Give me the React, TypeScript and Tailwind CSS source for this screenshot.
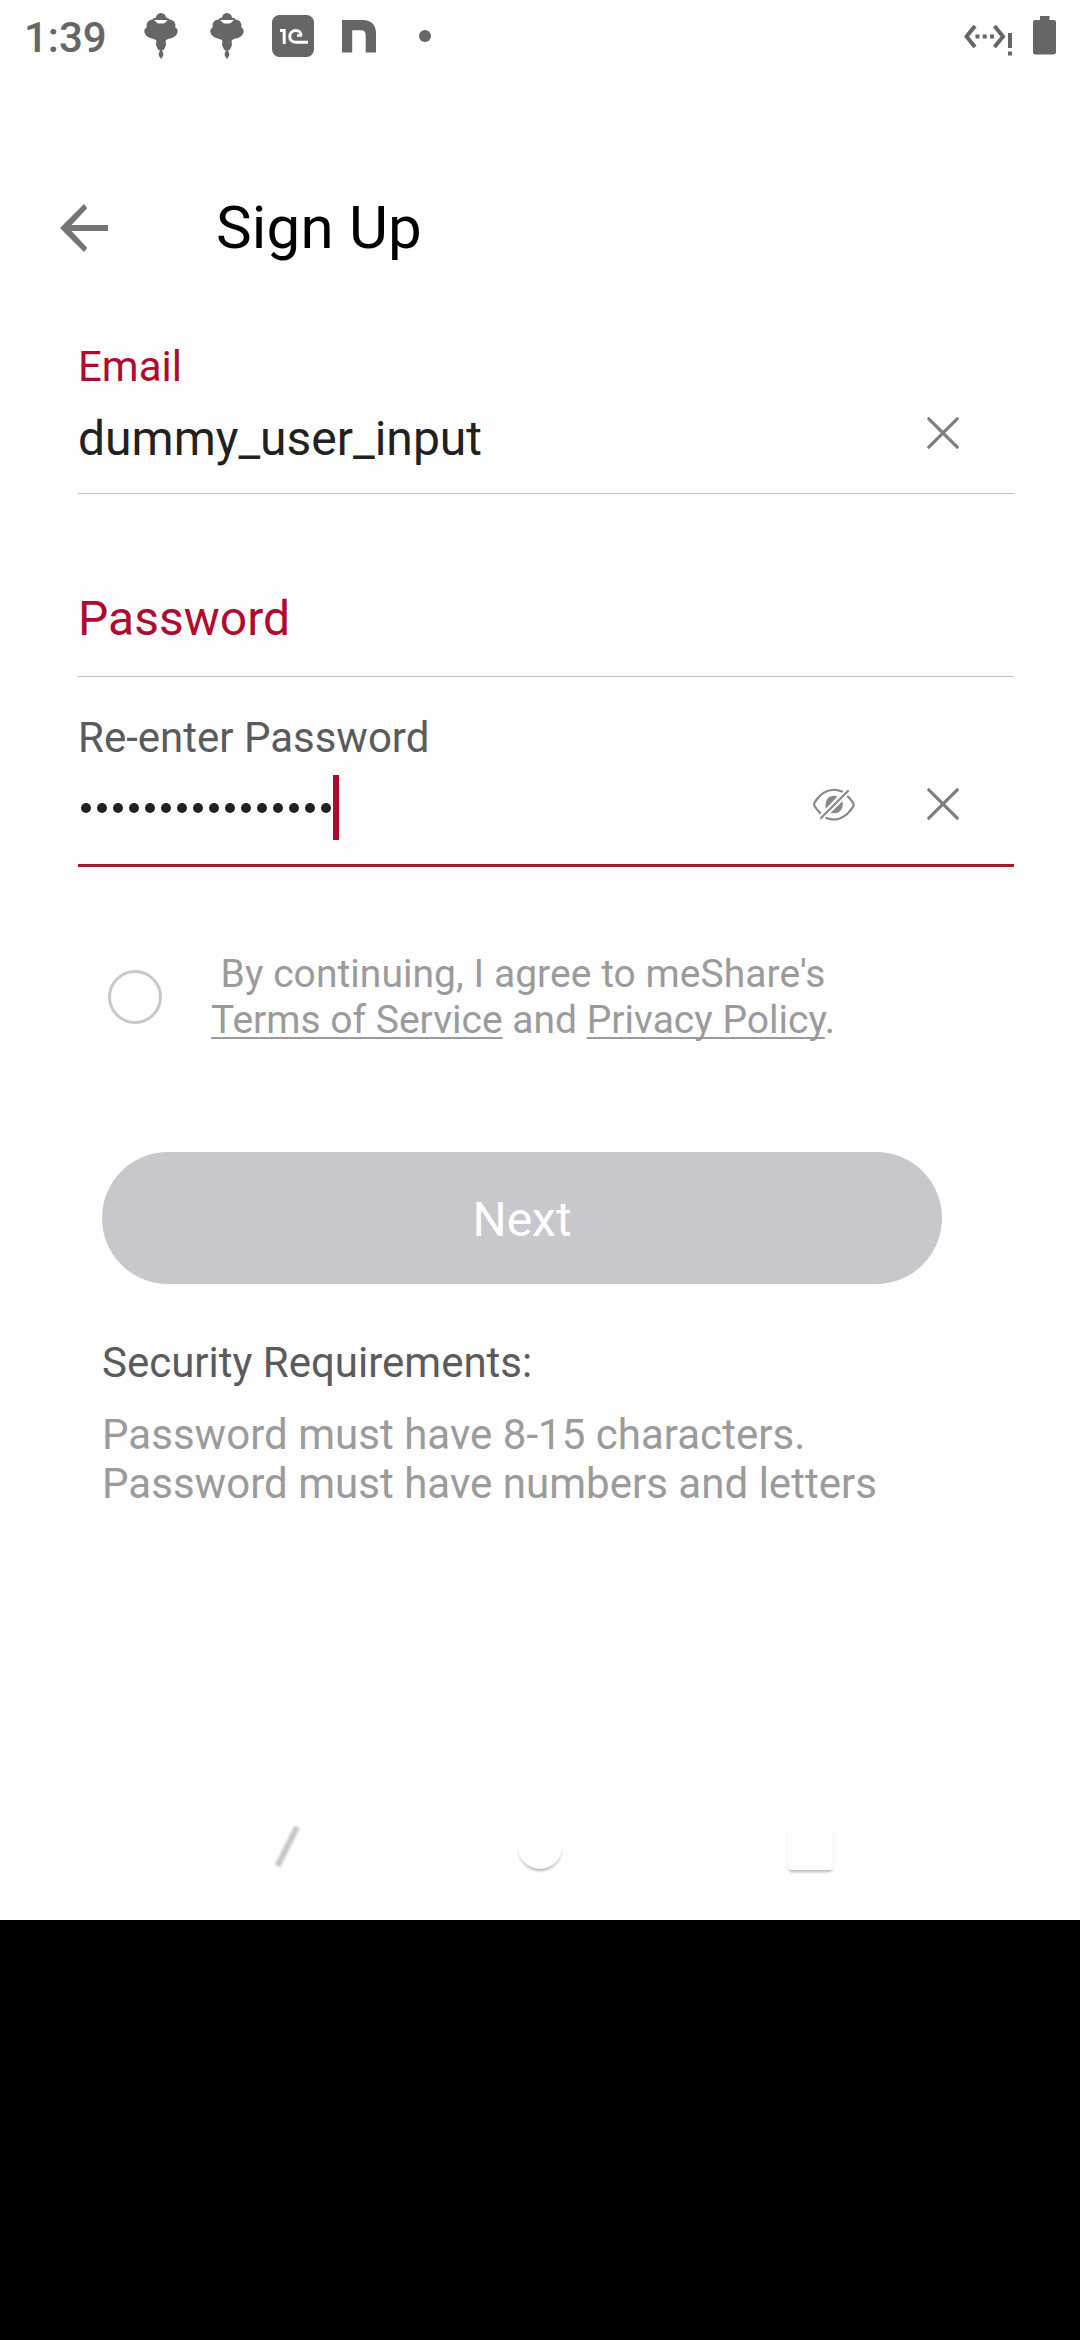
function Orchid() {
  return (
    <svg className="block h-[46px] w-[34px]" viewBox="0 0 34 46" fill="#666666">
      <path d="M17 0c-3 0-4.800 2.200-5 4.600C9.500 5 8.300 6 8.300 7h17.400c0-1-1.200-2-3.700-2.400C21.800 2.200 20 0 17 0z" />
      <path d="M11.500 8.200C9.500 6.300 6 6.400 4 8.600c-1.700 1.900-1.500 4-1.200 5.600C.8 15.500.2 17 .3 18.600c.2 2.800 2.400 5.200 5.200 6.200 3.500 1.200 6.600 1.600 6.900 3.300.2 1.300-.4 2-.4 3.400 0 1.500 1 2 1.200 3.200.3 1.700 1.500 2.600 3.800 2.600s3.500-.9 3.800-2.600c.2-1.200 1.200-1.700 1.200-3.200 0-1.400-.6-2.100-.4-3.400.3-1.700 3.400-2.100 6.900-3.300 2.800-1 5-3.400 5.200-6.200.1-1.600-.5-3.100-2.500-4.400.3-1.600.5-3.700-1.200-5.600-2-2.200-5.500-2.300-7.500-.4-1 1-1.800 2.200-3 2.200h-5c-1.200 0-2-1.200-3-2.200z" />
      <path d="M16.200 36h1.600c0 2 1.500 3.600 1.500 5.300 0 1.800-.8 2.700-1.500 3.200v1h-1.600v-1c-.7-.5-1.500-1.400-1.500-3.200 0-1.700 1.500-3.300 1.500-5.300z" />
    </svg>
  );
}

function OneC() {
  return (
    <svg className="block size-[42px]" viewBox="0 0 42 42" fill="none">
      <rect width="42" height="42" rx="7.500" fill="#666666" />
      <path d="M8 15.500h4.200V29" stroke="#fefefe" strokeWidth="3" />
      <path d="M29 20.500c0-3-2.200-5-5.200-5-3.400 0-6 2.600-6 6 0 3.600 2.600 5.800 6.200 5.800h12" stroke="#fefefe" strokeWidth="3" />
      <path d="M25 20.500h5" stroke="#fefefe" strokeWidth="2.500" />
    </svg>
  );
}

function LetterMark() {
  return (
    <svg className="block h-[33px] w-[34px]" viewBox="0 0 34 33" fill="#666666">
      <path d="M0 0h21c8 0 13 5 13 13v19.500H23.700V15c0-3-1.500-4.700-4.500-4.700h-9v22.200H0z" />
    </svg>
  );
}

function Network() {
  return (
    <svg className="block h-[33px] w-[49px]" viewBox="0 0 49 33" fill="none" stroke="#666666">
      <path d="M11 2L2.500 12.500 11 23M30.500 2L39 12.500 30.500 23" strokeWidth="4" />
      <path d="M11.500 12.500h4M18.700 12.500h4M26 12.500h4" strokeWidth="4" />
      <path d="M46 9v15M46 27.500v4" strokeWidth="4" />
    </svg>
  );
}

function Battery() {
  return (
    <svg className="block h-[39px] w-[23px]" viewBox="0 0 23 39" fill="#666666">
      <path d="M7 0h9.500v4H21q2 0 2 2v30q0 2.500-2.500 2.500h-18Q0 38.500 0 36V6q0-2 2-2h5z" />
    </svg>
  );
}

function BackArrow() {
  return (
    <svg className="block size-[48px]" viewBox="0 0 48 48" fill="#757575">
      <path d="M48 21H11.500L27.200 4.200 24 0 0 24l24 24 3.200-4.200L11.500 27H48z" />
    </svg>
  );
}

function Clear() {
  return (
    <svg className="block size-8" viewBox="0 0 32 32" fill="none" stroke="#7b7f82" strokeWidth="3.200" strokeLinecap="round">
      <path d="M1.800 1.800l28.400 28.400M30.200 1.800L1.800 30.200" />
    </svg>
  );
}

function EyeOff() {
  return (
    <svg className="block h-[34px] w-[42px]" viewBox="0 0 42 34" fill="none" stroke="#85898b" strokeWidth="2.200" strokeLinecap="round">
      <path d="M29 3.500C18 -1 8.500 4 1.800 14.200c-.9 1.500-.9 3 0 4.300 1.500 2.300 3.300 4.500 5.200 6.400" />
      <path d="M35 8.600c2 1.900 3.600 4 5 6 .9 1.500.9 2.700 0 4.200C33 29.500 23.500 34 13.500 30" />
      <path d="M35 3L8 30" />
      <path d="M24.500 8.500C18.500 6 12 9.800 12.500 18.500c.1 1 .3 1.600.5 2z" fill="#85898b" stroke="none" />
      <path d="M29.300 13.200C31.500 20.500 26 27 17.500 25z" fill="#85898b" stroke="none" />
    </svg>
  );
}

function StatusBar() {
  return (
    <header className="flex h-[72px] items-start justify-between pl-[24px] pr-[24px]">
      <div className="flex items-start">
        <span className="mt-[13px] w-[120px] text-[42px] font-medium leading-[49px] text-[#666666]">1:39</span>
        <div className="mt-[13px] w-[66px]"><Orchid /></div>
        <div className="mt-[13px] w-[62px]"><Orchid /></div>
        <div className="mt-[15px] w-[70px]"><OneC /></div>
        <div className="mt-[20px] w-[77px]"><LetterMark /></div>
        <div className="mt-[30px] size-3 rounded-full bg-[#666666]" />
      </div>
      <div className="flex items-start gap-[20px]">
        <div className="mt-[24px]"><Network /></div>
        <div className="mt-[16px]"><Battery /></div>
      </div>
    </header>
  );
}

function NavBar() {
  return (
    <nav className="flex h-[120px] items-start pl-[264px]">
      <svg className="block h-[70px] w-[50px]" viewBox="0 0 50 70">
        <path d="M33 27L13.500 66" stroke="#c8c8c8" strokeWidth="6" className="blur-[1px]" />
      </svg>
      <div className="ml-[204px] mt-[25px] size-[44px] rounded-full bg-[#fefefe] shadow-[0_3px_3px_-1px_rgba(0,0,0,0.28)]" />
      <div className="ml-[226px] mt-[25px] size-[45px] rounded-[4px] bg-[#fefefe] shadow-[0_3px_3px_-1px_rgba(0,0,0,0.28)]" />
    </nav>
  );
}

export default function App() {
  return (
    <div className="flex h-[2340px] w-[1080px] flex-col overflow-hidden bg-black font-[Roboto,sans-serif]">
      <div className="flex h-[1920px] flex-col justify-between bg-[#fefefe]">
        <div>
          <StatusBar />
          <div className="flex h-[270px] items-start pl-[60px] pt-[120px]">
            <button className="mt-[12px]"><BackArrow /></button>
            <h1 className="ml-[108px] mt-px text-[60px] leading-[70px] tracking-[0.2px] text-black">Sign Up</h1>
          </div>

          <main className="pl-[78px] pr-[66px]">
            <section className="flex h-[152px] items-start justify-between border-b border-[#c0c0c0] pr-[55px]">
              <div>
                <p className="text-[42px] leading-[49px] text-[#b00b2e]">Email</p>
                <p className="mt-[20px] text-[48px] leading-[56px] text-[#212121]">dummy_user_input</p>
              </div>
              <button className="mt-[75px]"><Clear /></button>
            </section>

            <section className="h-[183px] border-b border-[#c0c0c0] pt-[97px]">
              <p className="text-[48px] leading-[56px] text-[#b00b2e]">Password</p>
            </section>

            <section className="h-[190px] border-b-[3px] border-[#a6192e] pt-[36px]">
              <p className="text-[42px] leading-[49px] text-[#5a5b5c]">Re-enter Password</p>
              <div className="mt-[13px] flex items-start justify-between pr-[55px]">
                <div className="flex h-[65px] items-center pl-[3px]">
                  <div className="flex gap-[6px] pt-px">
                    {Array.from({ length: 16 }, (_, i) => (
                      <span key={i} className="h-[10px] w-[10px] rounded-full bg-[#212121]" />
                    ))}
                  </div>
                  <span className="ml-[2px] h-[65px] w-[6px] bg-[#b00b2e]" />
                </div>
                <div className="flex gap-[72px] pt-[13px]">
                  <EyeOff />
                  <Clear />
                </div>
              </div>
            </section>

            <section className="mt-[84px] flex items-start pl-[30px]">
              <span className="mt-[19px] size-[54px] rounded-full border-[3px] border-[#c8c8cc]" />
              <p className="ml-[49px] text-center text-[39px] leading-[46px] text-[#9b9b9b]">
                <span className="tracking-[0.05px]">By continuing, I agree to meShare's</span>
                <br />
                <span className="underline decoration-2 underline-offset-[4px] [text-decoration-skip-ink:none]">Terms of Service</span> and{" "}
                <span className="underline decoration-2 underline-offset-[4px] [text-decoration-skip-ink:none]">Privacy Policy</span>.
              </p>
            </section>

            <button className="ml-[24px] mt-[109px] block h-[132px] w-[840px] rounded-full bg-[#c8c7cc] pt-1 text-[48px] leading-[56px] text-white">
              Next
            </button>

            <section className="ml-[24px] mt-[54px] text-[42px] leading-[49px]">
              <p className="text-[#5a5b5c]">Security Requirements:</p>
              <p className="mt-[23px] tracking-[0.03px] text-[#9b9b9b]">
                Password must have 8-15 characters.
                <br />
                Password must have numbers and letters
              </p>
            </section>
          </main>
        </div>
        <NavBar />
      </div>
    </div>
  );
}
